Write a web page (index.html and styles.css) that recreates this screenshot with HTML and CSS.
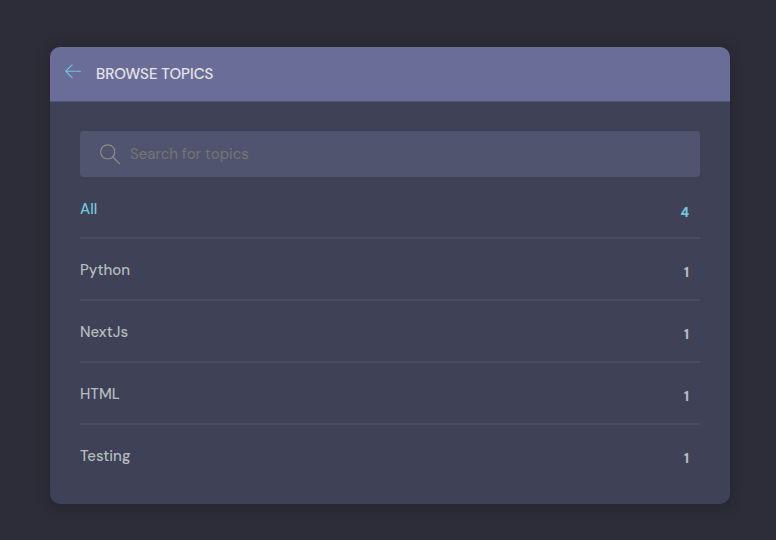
FILE: index.html
```html
<!DOCTYPE html>
<html lang="en">
<head>
<meta charset="utf-8">
<title>Browse Topics</title>
<link rel="stylesheet" href="styles.css">
</head>
<body>
<main class="card">
  <header class="card-header">
    <a class="back" href="#" aria-label="Back">
      <svg width="16" height="16" viewBox="0 0 16 16"><path d="M15.6 7.2H.7M7.1.8.7 7.2l6.4 6.4"/></svg>
    </a>
    <h1>Browse Topics</h1>
  </header>
  <div class="card-body">
    <form class="search">
      <svg width="20" height="20" viewBox="0 0 20 20"><circle cx="7.7" cy="7.9" r="7.1"/><path d="m12.8 13 6.7 6.7"/></svg>
      <input type="text" placeholder="Search for topics" aria-label="Search for topics">
    </form>
    <ul class="topics">
      <li class="active"><a href="#">All</a><span>4</span></li>
      <li><a href="#">Python</a><span>1</span></li>
      <li><a href="#">NextJs</a><span>1</span></li>
      <li><a href="#">HTML</a><span>1</span></li>
      <li><a href="#">Testing</a><span>1</span></li>
    </ul>
  </div>
</main>
</body>
</html>
```
FILE: styles.css
```css
* { box-sizing: border-box; margin: 0; padding: 0; }
body {
  min-height: 540px;
  padding: 47.4px 46px 0 50px;
  background: #2d2d39;
  color: #b2bdbd;
  font: 500 15px/24px "DM Sans", Inter, sans-serif;
}
a { color: inherit; text-decoration: none; }
.card {
  width: 680px;
  height: 456.6px;
  border-radius: 10px;
  background: #3f4156;
  box-shadow: 1px 1px 12px 4px rgba(0, 0, 0, .12);
}
.card-header {
  display: flex;
  height: 54.4px;
  padding: 14.6px 15px 0;
  gap: 15px;
  border-radius: 10px 10px 0 0;
  background: #6b6d99;
  border-bottom: 1px solid #51546e;
}
.back { display: block; width: 16px; height: 16px; margin-top: 2px; }
svg { display: block; flex: none; overflow: visible; fill: none; stroke-linecap: round; stroke-linejoin: round; }
.back svg { stroke: #71c6dd; stroke-width: 1.1; }
h1 {
  color: #e5e5e5;
  font-size: 15px;
  font-weight: 500;
  line-height: 24px;
  text-transform: uppercase;
}
.card-body { padding: 29.6px 30px 0; }
.search {
  display: flex;
  height: 46px;
  padding: 0 20px;
  gap: 10px;
  align-items: center;
  border-radius: 4px;
  background: #51546e;
}
.search svg { stroke: #8d8d8d; stroke-width: 1.2; }
input {
  flex: 1;
  border: 0;
  outline: 0;
  background: transparent;
  font: 400 15px/24px "DM Sans", Inter, sans-serif;
}
input::placeholder { color: #757575; opacity: 1; }
.topics { list-style: none; }
.topics li {
  display: flex;
  justify-content: space-between;
  height: 62px;
  padding: 19px 11px 0 0;
  border-bottom: 2px solid #4a4c61;
}
.topics li:first-child { height: 61.6px; padding-top: 20px; }
.topics li:last-child { border: 0; }
.topics .active { color: #71c6dd; }
.topics span { padding-top: 3.4px; font-size: 13px; font-weight: 900; }
```
